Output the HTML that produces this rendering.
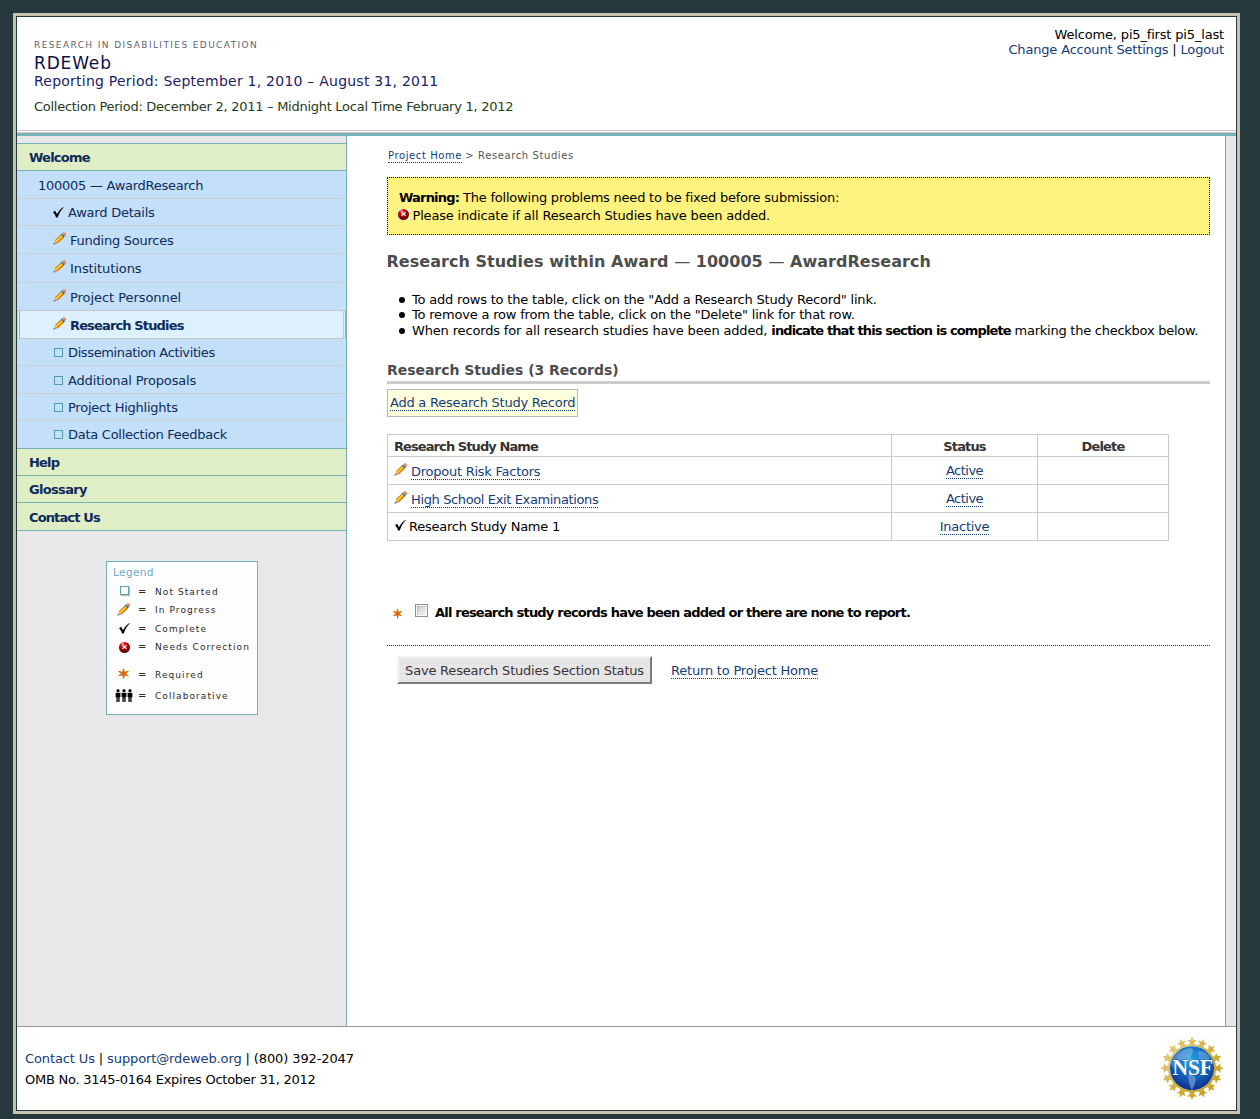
<!DOCTYPE html>
<html lang="en">
<head>
<meta charset="utf-8">
<title>RDEWeb - Research Studies</title>
<style>
html,body{margin:0;padding:0;}
body{background:#25383c;font-family:"DejaVu Sans","Liberation Sans",sans-serif;font-size:13px;color:#000;width:1260px;height:1119px;position:relative;overflow:hidden;letter-spacing:-0.25px;}
a{color:#143c7a;text-decoration:none;}
#frame{position:absolute;left:13px;top:13px;width:1219px;height:1093px;border:3px solid #c6c2ae;background:#25383c;padding:1px;}
#page{position:relative;width:1219px;height:1093px;background:#fff;overflow:hidden;}
/* header */
#header{position:absolute;left:0;top:0;width:1219px;height:113px;border-bottom:1px solid #c9c9c9;}
#hline2{position:absolute;left:0;top:115px;width:1219px;height:1px;background:#d6cccc;}
#tealbar{position:absolute;left:0;top:116px;width:1219px;height:3px;background:#76b1b5;}
#org{position:absolute;left:17px;top:22px;font-size:9px;letter-spacing:1.39px;color:#62626c;line-height:12px;white-space:nowrap;}
#site{position:absolute;left:17px;top:35px;font-size:17px;color:#0e0e48;line-height:22px;letter-spacing:0.85px;white-space:nowrap;}
#rep{position:absolute;left:17px;top:55px;font-size:14px;color:#1a2268;line-height:18px;letter-spacing:0.23px;white-space:nowrap;}
#coll{position:absolute;left:17px;top:82px;font-size:13px;color:#263a1a;line-height:16px;letter-spacing:-0.27px;white-space:nowrap;}
#user{position:absolute;right:12px;top:10px;text-align:right;line-height:15px;font-size:13px;letter-spacing:-0.17px;white-space:nowrap;}
/* main */
#main{position:absolute;left:0;top:119px;width:1219px;height:890px;background:#e8e8e8;}
#side{position:absolute;left:0;top:0;width:329px;height:890px;border-right:1px solid #76b1b5;}
#content{position:absolute;left:330px;top:0;width:878px;height:890px;background:#fff;border-right:1px solid #76b1b5;}
#nav{position:absolute;left:0;top:7px;width:329px;margin:0;padding:0;list-style:none;border-top:1px solid #76b1b5;}
#nav li{display:block;margin:0;padding:0;box-sizing:border-box;white-space:nowrap;position:relative;}
#nav li.g{background:#dfeec5;border-bottom:1px solid #76b1b5;font-weight:bold;}
#nav li.g a{color:#0d2a5c;position:absolute;left:13px;}
#nav li.b{background:#c3e0f8;border-bottom:1px solid #cfcfcf;}
#nav li.b a{color:#0d2a5c;position:absolute;}
#nav li.last{border-bottom:1px solid #76b1b5;}

#nav li a{line-height:16px;font-size:13px;}
#nav .ck{position:absolute;left:36px;}
#nav .pc{position:absolute;left:36px;}
#nav .sq{position:absolute;left:37px;width:7px;height:7px;border:1px solid #4f9ca3;}
#nav li.sel{background:#c3e0f8;border-bottom:1px solid #c9c9c9;font-weight:bold;}
#nav li.sel .selbox{position:absolute;left:0;right:0;top:-1px;bottom:-1px;background:#ddf0fe;border:1px solid #c9c9c9;border-left:1px solid #d0d0d0;border-right:1px solid #a4a4a4;}
#nav li.sel .selbox:before{content:"";position:absolute;left:1px;top:0;bottom:0;width:1px;background:#a8a8a8;}
#nav li.sel .selbox:after{content:"";position:absolute;right:1px;top:0;bottom:0;width:1px;background:#c9c9c9;}

/* content: coordinates relative to #content (abs x-347, abs y-136) */
a.dl{border-bottom:1px dotted #143c7a;}
#crumb{position:absolute;left:41px;top:13px;font-size:10px;line-height:14px;color:#555;letter-spacing:0.6px;white-space:nowrap;}
#crumb a{display:inline-block;height:13px;margin-right:-0.6px;}
#warn{position:absolute;left:40px;top:41px;width:799px;height:38px;padding:11px 11px 7px 11px;border:1px dotted #000;background:#fff380;line-height:18px;font-size:13px;white-space:nowrap;letter-spacing:-0.18px;}
#warn .l1{letter-spacing:-0.22px;}
#warn b{letter-spacing:-0.8px;}
#warn .err{position:relative;top:0px;margin-right:3.5px;margin-left:-1px;}
#h1{position:absolute;left:39.5px;top:115px;margin:0;font-size:16px;line-height:22px;font-weight:bold;color:#4d4d4d;letter-spacing:0.03px;white-space:nowrap;}
#h1 .d{font-weight:normal;}
#tips{position:absolute;left:65px;top:156px;margin:0;padding:0;list-style:none;font-size:13px;line-height:16px;white-space:nowrap;letter-spacing:-0.19px;}
#tips .t3 .a{letter-spacing:-0.16px;}#tips .t3 .c{letter-spacing:-0.25px;}
#tips li{position:absolute;left:0;}
#tips .t1{top:0}#tips .t2{top:15px}#tips .t3{top:31px}
#tips li:before{content:"";position:absolute;left:-13px;top:5px;width:6px;height:6px;border-radius:50%;background:#000;}
#tips b{letter-spacing:-0.88px;}
#h2{position:absolute;left:40px;top:222px;width:823px;height:23px;margin:0;border-bottom:3px solid #ccc;font-size:14px;line-height:24px;font-weight:bold;color:#4d4d4d;letter-spacing:-0.04px;white-space:nowrap;text-indent:0;}
#addbtn{position:absolute;left:40px;top:253px;width:191px;height:28px;border:1px solid #b9b9b9;background:#ffffde;box-sizing:border-box;font-size:13px;line-height:16px;white-space:nowrap;letter-spacing:-0.2px;}
#addbtn a{position:absolute;left:2px;top:5px;display:block;height:15px;line-height:16px;letter-spacing:-0.24px;}
#tbl{position:absolute;left:40px;top:298px;border-collapse:separate;border-spacing:0;font-size:13px;table-layout:fixed;width:782px;border-top:1px solid #c9c9c9;border-left:1px solid #c9c9c9;}
#tbl th,#tbl td{border-right:1px solid #c9c9c9;border-bottom:1px solid #c9c9c9;padding:0;position:relative;white-space:nowrap;box-sizing:content-box;}
#tbl th{height:21px;font-weight:bold;color:#333;letter-spacing:-0.84px;}
#tbl th.c1{letter-spacing:-0.91px;}
#tbl td{height:27px;}
#tbl .c1{width:503px;text-align:left;}
#tbl th.c1{width:497px;}
#tbl .c2{width:145px;text-align:center;}
#tbl .c3{width:130px;text-align:center;}
#tbl th.c1{padding-left:6px;}
#tbl th span{position:relative;top:1px;}
#tbl .pc{position:absolute;left:6px;top:6px;}
#tbl .ck{position:absolute;left:7px;top:7px;}
#tbl .n1{position:absolute;left:23px;top:7px;line-height:16px;height:15px;display:block;}
#tbl .n2{position:absolute;left:21px;top:6px;line-height:16px;}
#chk{position:absolute;left:40px;top:460px;height:30px;width:800px;}
#chk .star{position:absolute;left:6px;top:11.6px;}
#chk .cb{position:absolute;left:28px;top:8px;width:11px;height:11px;border:1px solid #8e8f8f;background:linear-gradient(135deg,#bcc2cb 0%,#dfe2e6 50%,#f6f6f7 100%);box-shadow:inset 0 0 0 1px #fbfbfb, inset 2px 2px 0 0 rgba(150,158,170,0.35);}
#chk label{position:absolute;left:48px;top:9px;font-weight:bold;font-size:13px;line-height:16px;white-space:nowrap;letter-spacing:-0.8px;}
#dots{position:absolute;left:40px;top:509px;width:823px;height:0;border-top:1px dotted #333;}
#savebtn{position:absolute;left:50px;top:520px;width:251px;height:23px;padding-top:1px;border:2px solid;border-color:#f3f3f3 #7b7b7b #7b7b7b #f3f3f3;background:#e6e6e6;color:#3a3238;font-size:13px;line-height:24px;text-align:center;white-space:nowrap;letter-spacing:-0.2px;}
#ret{position:absolute;left:324px;top:527px;display:block;height:15px;font-size:13px;line-height:16px;white-space:nowrap;letter-spacing:-0.2px;}

#legend{position:absolute;left:89px;top:425px;width:150px;height:152px;border:1px solid #76b1b5;background:#fdfdfd;font-size:9px;letter-spacing:1.08px;color:#2a2a2a;}
#legend .lt{position:absolute;left:6px;top:3px;font-size:10.5px;line-height:14px;color:#6ea9c9;letter-spacing:0.38px;}
#legend .lr{position:absolute;left:0;width:150px;height:12px;line-height:12px;white-space:nowrap;}
#legend .lr svg{position:absolute;}
#legend .lr i{position:absolute;left:31px;top:0;font-style:normal;font-size:10px;}
#legend .lr em{position:absolute;left:48px;top:0;font-style:normal;}
#legend .lsq{position:absolute;left:13px;top:0px;width:7px;height:7px;border:1px solid #5fa0b0;background:#fff;box-shadow:1px 1px 1px #bbb;}
#footer{position:absolute;left:0;top:1009px;width:1219px;height:83px;border-top:1px solid #999;background:#fff;}

#f1{position:absolute;left:8px;top:24px;font-size:13px;line-height:16px;white-space:nowrap;letter-spacing:-0.12px;}
#f2{position:absolute;left:8px;top:45px;font-size:13px;line-height:16px;white-space:nowrap;letter-spacing:-0.25px;}
#nsf{position:absolute;left:1142.5px;top:8.5px;}
</style>
</head>
<body>
<svg width="0" height="0" style="position:absolute"><defs>
<g id="pencil">
<path d="M0.93 11.55 L2.32 8.10 L5.04 10.90 L1.56 12.19 Z" fill="#e3b49c"/>
<path d="M1.24 11.87 L3.89 9.71 L5.04 10.90 L1.56 12.19 Z" fill="#c98f84"/>
<path d="M0.46 12.64 L0.50 11.83 L1.26 10.74 L2.38 11.89 L1.27 12.61 Z" fill="#77696a"/>
<path d="M2.10 8.31 L7.98 2.59 L10.70 5.38 L4.83 11.10 Z" fill="#e58a12"/>
<path d="M2.77 8.99 L8.64 3.27 L9.83 4.49 L3.95 10.21 Z" fill="#ffcf1e"/>
<path d="M3.12 9.35 L8.99 3.63 L9.41 4.06 L3.53 9.78 Z" fill="#ffe23c"/>
<path d="M3.95 10.21 L9.83 4.49 L10.70 5.38 L4.83 11.10 Z" fill="#e48c06"/>
<path d="M4.44 10.71 L10.31 4.99 L10.70 5.38 L4.83 11.10 Z" fill="#c9700c"/>
<path d="M2.10 8.31 L7.98 2.59 L8.29 2.91 L2.42 8.63 Z" fill="#cf7a10"/>
<path d="M7.83 2.73 L9.27 1.33 L11.99 4.13 L10.55 5.52 Z" fill="#2f6f92"/>
<path d="M8.57 3.48 L10.00 2.08 L10.77 2.87 L9.33 4.27 Z" fill="#5ea6d6"/>
<path d="M9.27 1.33 L10.41 0.22 L11.51 0.34 L13.04 1.91 L13.13 3.01 L11.99 4.13 Z" fill="#ee7a4c"/>
<path d="M9.79 1.87 L11.29 0.40 L12.06 1.19 L10.56 2.66 Z" fill="#f7a07a"/>
</g>
<g id="check"><path d="M0.1 5.3 L2.1 3.8 Q3.3 5.4 3.9 7.3 Q6.2 2.6 10.2 0 L10.6 0.5 Q7 3.9 4.7 10.4 L3 10.4 Q2 7.3 0.1 5.3 Z" fill="#000"/></g>
<radialGradient id="errg" cx="0.5" cy="0.42" r="0.68" fx="0.3" fy="0.15"><stop offset="0" stop-color="#f2b4b4"/><stop offset="0.28" stop-color="#d81414"/><stop offset="0.58" stop-color="#a80000"/><stop offset="1" stop-color="#2a0000"/></radialGradient>
<g id="err"><rect x="0" y="0" width="11" height="11" fill="#fff"/><circle cx="5.5" cy="5.5" r="5.5" fill="url(#errg)"/><path d="M3.5 3.2 L7.5 6.8 M7.5 3.2 L3.5 6.8" stroke="#fff" stroke-width="1.25" stroke-linecap="butt" opacity="0.92"/></g>
<g id="star"><path d="M5.90 5.60 L5.20 1.55 L4.60 0.20 L4.00 1.55 L3.30 5.60 Z M3.30 5.60 L4.00 9.65 L4.60 11.00 L5.20 9.65 L5.90 5.60 Z M5.25 6.73 L8.34 4.13 L9.19 2.95 L7.74 3.09 L3.95 4.47 Z M3.95 6.73 L7.74 8.11 L9.19 8.25 L8.34 7.07 L5.25 4.47 Z M3.95 4.47 L0.86 7.07 L0.01 8.25 L1.46 8.11 L5.25 6.73 Z M5.25 4.47 L1.46 3.09 L0.01 2.95 L0.86 4.13 L3.95 6.73 Z" fill="#de6a0c"/><circle cx="4.6" cy="5.6" r="1.9" fill="#de6a0c"/></g>
<g id="ppl"><g id="p1"><circle cx="3" cy="1.8" r="1.6" fill="#000"/><path d="M0.6 4 H5.4 V8.6 H4.6 V14 H3.3 V9.5 H2.7 V14 H1.4 V8.6 H0.6 Z" fill="#000"/></g><use href="#p1" x="6"/><use href="#p1" x="12"/></g>
<linearGradient id="gold" x1="0" y1="0" x2="1" y2="1"><stop offset="0" stop-color="#e6d28c"/><stop offset="0.5" stop-color="#d2b040"/><stop offset="1" stop-color="#c49c1c"/></linearGradient>
<radialGradient id="globe" cx="0.5" cy="0.32" r="0.7"><stop offset="0" stop-color="#1fa8e2"/><stop offset="0.45" stop-color="#1672c6"/><stop offset="1" stop-color="#0a2a88"/></radialGradient>
<g id="nsflogo"><rect x="0" y="0" width="64" height="64" fill="#fdfdf9"/>
<path d="M32.00 0.50 L33.35 3.74 L36.85 4.02 L34.19 6.31 L35.00 9.73 L32.00 7.90 L29.00 9.73 L29.81 6.31 L27.15 4.02 L30.65 3.74 Z M44.13 2.91 L44.14 6.42 L47.26 8.02 L43.93 9.12 L43.37 12.58 L41.30 9.75 L37.83 10.29 L39.89 7.44 L38.30 4.31 L41.64 5.39 Z M54.42 9.78 L53.08 13.03 L55.35 15.71 L51.85 15.44 L50.01 18.43 L49.18 15.02 L45.77 14.19 L48.76 12.35 L48.49 8.85 L51.17 11.12 Z M61.29 20.07 L58.81 22.56 L59.89 25.90 L56.76 24.31 L53.91 26.37 L54.45 22.90 L51.62 20.83 L55.08 20.27 L56.18 16.94 L57.78 20.06 Z M63.70 32.20 L60.46 33.55 L60.18 37.05 L57.89 34.39 L54.47 35.20 L56.30 32.20 L54.47 29.20 L57.89 30.01 L60.18 27.35 L60.46 30.85 Z M61.29 44.33 L57.78 44.34 L56.18 47.46 L55.08 44.13 L51.62 43.57 L54.45 41.50 L53.91 38.03 L56.76 40.09 L59.89 38.50 L58.81 41.84 Z M54.42 54.62 L51.17 53.28 L48.49 55.55 L48.76 52.05 L45.77 50.21 L49.18 49.38 L50.01 45.97 L51.85 48.96 L55.35 48.69 L53.08 51.37 Z M44.13 61.49 L41.64 59.01 L38.30 60.09 L39.89 56.96 L37.83 54.11 L41.30 54.65 L43.37 51.82 L43.93 55.28 L47.26 56.38 L44.14 57.98 Z M32.00 63.90 L30.65 60.66 L27.15 60.38 L29.81 58.09 L29.00 54.67 L32.00 56.50 L35.00 54.67 L34.19 58.09 L36.85 60.38 L33.35 60.66 Z M19.87 61.49 L19.86 57.98 L16.74 56.38 L20.07 55.28 L20.63 51.82 L22.70 54.65 L26.17 54.11 L24.11 56.96 L25.70 60.09 L22.36 59.01 Z M9.58 54.62 L10.92 51.37 L8.65 48.69 L12.15 48.96 L13.99 45.97 L14.82 49.38 L18.23 50.21 L15.24 52.05 L15.51 55.55 L12.83 53.28 Z M2.71 44.33 L5.19 41.84 L4.11 38.50 L7.24 40.09 L10.09 38.03 L9.55 41.50 L12.38 43.57 L8.92 44.13 L7.82 47.46 L6.22 44.34 Z M0.30 32.20 L3.54 30.85 L3.82 27.35 L6.11 30.01 L9.53 29.20 L7.70 32.20 L9.53 35.20 L6.11 34.39 L3.82 37.05 L3.54 33.55 Z M2.71 20.07 L6.22 20.06 L7.82 16.94 L8.92 20.27 L12.38 20.83 L9.55 22.90 L10.09 26.37 L7.24 24.31 L4.11 25.90 L5.19 22.56 Z M9.58 9.78 L12.83 11.12 L15.51 8.85 L15.24 12.35 L18.23 14.19 L14.82 15.02 L13.99 18.43 L12.15 15.44 L8.65 15.71 L10.92 13.03 Z M19.87 2.91 L22.36 5.39 L25.70 4.31 L24.11 7.44 L26.17 10.29 L22.70 9.75 L20.63 12.58 L20.07 9.12 L16.74 8.02 L19.86 6.42 Z" fill="url(#gold)"/>
<circle cx="32" cy="32.2" r="23" fill="none" stroke="url(#gold)" stroke-width="2"/>
<circle cx="32" cy="32.2" r="22" fill="url(#globe)"/>
<path d="M17 22 Q20 13 30 12 Q34 12 33 16 Q30 20 31 24 Q27 27 24 24 Q20 26 17 22 Z" fill="#9cc0e6" opacity="0.5"/>
<path d="M38 15 Q46 14 50 22 Q48 27 43 25 Q38 24 38 15 Z" fill="#8fb4e0" opacity="0.45"/>
<path d="M28 39 Q34 38 36 43 Q35 49 32 54 Q29 50 28 39 Z" fill="#7a9cd6" opacity="0.7"/>
<path d="M11 27 Q14 18 22 13 Q16 22 16 34 Q12 32 11 27 Z" fill="#8fb0e0" opacity="0.45"/>
</g>
</defs></svg>
<div id="frame"><div id="page">
<div id="header">
  <div id="org">RESEARCH IN DISABILITIES EDUCATION</div>
  <div id="site">RDEWeb</div>
  <div id="rep">Reporting Period: September 1, 2010 – August 31, 2011</div>
  <div id="coll">Collection Period: December 2, 2011 – Midnight Local Time February 1, 2012</div>
  <div id="user">Welcome, pi5_first pi5_last<br><a href="#">Change Account Settings</a> | <a href="#">Logout</a></div>
</div>
<div id="hline2"></div>
<div id="tealbar"></div>
<div id="main">
  <div id="side">
    <ul id="nav">
      <li class="g" style="height:27px"><a href="#" style="left:12px;top:6px;letter-spacing:-0.76px">Welcome</a></li>
      <li class="b" style="height:28px"><a href="#" style="left:21px;top:7px;letter-spacing:-0.26px">100005 — AwardResearch</a></li>
      <li class="b" style="height:27px"><svg class="ck" style="top:8px" width="11" height="11" viewBox="0 0 11 11"><use href="#check"/></svg><a href="#" style="left:51px;top:6px;letter-spacing:-0.22px">Award Details</a></li>
      <li class="b" style="height:28px"><svg class="pc" style="top:6px" width="13" height="13" viewBox="0 0 13 13"><use href="#pencil"/></svg><a href="#" style="left:53px;top:7px;letter-spacing:-0.24px">Funding Sources</a></li>
      <li class="b" style="height:29px"><svg class="pc" style="top:6px" width="13" height="13" viewBox="0 0 13 13"><use href="#pencil"/></svg><a href="#" style="left:53px;top:7px;letter-spacing:-0.09px">Institutions</a></li>
      <li class="b" style="height:28px"><svg class="pc" style="top:6px" width="13" height="13" viewBox="0 0 13 13"><use href="#pencil"/></svg><a href="#" style="left:53px;top:7px;letter-spacing:-0.06px">Project Personnel</a></li>
      <li class="b sel" style="height:28px"><div class="selbox"></div><svg class="pc" style="top:6px" width="13" height="13" viewBox="0 0 13 13"><use href="#pencil"/></svg><a href="#" style="left:53px;top:7px;letter-spacing:-0.855px">Research Studies</a></li>
      <li class="b" style="height:27px"><span class="sq" style="top:9px"></span><a href="#" style="left:51px;top:6px;letter-spacing:-0.38px">Dissemination Activities</a></li>
      <li class="b" style="height:28px"><span class="sq" style="top:10px"></span><a href="#" style="left:51px;top:7px;letter-spacing:-0.16px">Additional Proposals</a></li>
      <li class="b" style="height:27px"><span class="sq" style="top:9px"></span><a href="#" style="left:51px;top:6px;letter-spacing:-0.24px">Project Highlights</a></li>
      <li class="b last" style="height:28px"><span class="sq" style="top:9px"></span><a href="#" style="left:51px;top:6px;letter-spacing:-0.27px">Data Collection Feedback</a></li>
      <li class="g" style="height:27px"><a href="#" style="left:12px;top:6px;letter-spacing:-0.83px">Help</a></li>
      <li class="g" style="height:27px"><a href="#" style="left:12px;top:6px;letter-spacing:-0.67px">Glossary</a></li>
      <li class="g" style="height:28px"><a href="#" style="left:12px;top:7px;letter-spacing:-0.87px">Contact Us</a></li>
    </ul>
    <div id="legend">
      <div class="lt">Legend</div>
      <div class="lr" style="top:24px"><span class="lsq"></span><i>=</i><em>Not Started</em></div>
      <div class="lr" style="top:42px"><svg style="left:10px;top:-1px" width="13" height="13" viewBox="0 0 13 13"><use href="#pencil"/></svg><i>=</i><em>In Progress</em></div>
      <div class="lr" style="top:61px"><svg style="left:12px;top:0px" width="11" height="11" viewBox="0 0 11 11"><use href="#check"/></svg><i>=</i><em>Complete</em></div>
      <div class="lr" style="top:79px"><svg style="left:11.5px;top:1px" width="11" height="11" viewBox="0 0 11 11"><use href="#err"/></svg><i>=</i><em>Needs Correction</em></div>
      <div class="lr" style="top:107px"><svg style="left:11px;top:-1px" width="12" height="12" viewBox="0 0 10 12" preserveAspectRatio="none"><use href="#star"/></svg><i>=</i><em>Required</em></div>
      <div class="lr" style="top:128px"><svg style="left:8px;top:-1px" width="18" height="13" viewBox="0 0 18 14" preserveAspectRatio="none"><use href="#ppl"/></svg><i>=</i><em>Collaborative</em></div>
    </div>
  </div>
  <div id="content">
    <div id="crumb"><a href="#" class="dl">Project Home</a> &gt; Research Studies</div>
    <div id="warn"><span class="l1"><b>Warning:</b> The following problems need to be fixed before submission:</span><br><svg class="err" width="11" height="11" viewBox="0 0 11 11"><use href="#err"/></svg><span class="l2">Please indicate if all Research Studies have been added.</span></div>
    <h1 id="h1">Research Studies within Award <span class="d">—</span> 100005 <span class="d">—</span> AwardResearch</h1>
    <ul id="tips">
      <li class="t1">To add rows to the table, click on the "Add a Research Study Record" link.</li>
      <li class="t2">To remove a row from the table, click on the "Delete" link for that row.</li>
      <li class="t3"><span class="a">When records for all research studies have been added, </span><b>indicate that this section is complete</b><span class="c"> marking the checkbox below.</span></li>
    </ul>
    <h2 id="h2"><span>Research Studies (3 Records)</span></h2>
    <div id="addbtn"><a href="#" class="dl">Add a Research Study Record</a></div>
    <table id="tbl" cellspacing="0">
      <tr class="hd"><th class="c1"><span>Research Study Name</span></th><th class="c2"><span>Status</span></th><th class="c3"><span>Delete</span></th></tr>
      <tr><td class="c1"><svg class="pc" width="13" height="13" viewBox="0 0 13 13"><use href="#pencil"/></svg><a href="#" class="dl n1">Dropout Risk Factors</a></td><td class="c2"><a href="#" class="dl" style="letter-spacing:-0.5px">Active</a></td><td class="c3"></td></tr>
      <tr><td class="c1"><svg class="pc" width="13" height="13" viewBox="0 0 13 13"><use href="#pencil"/></svg><a href="#" class="dl n1" style="letter-spacing:-0.37px">High School Exit Examinations</a></td><td class="c2"><a href="#" class="dl" style="letter-spacing:-0.5px">Active</a></td><td class="c3"></td></tr>
      <tr><td class="c1"><svg class="ck" width="11" height="11" viewBox="0 0 11 11"><use href="#check"/></svg><span class="n2">Research Study Name 1</span></td><td class="c2"><a href="#" class="dl">Inactive</a></td><td class="c3"></td></tr>
    </table>
    <div id="chk"><svg class="star" width="10" height="12" viewBox="0 0 10 12"><use href="#star"/></svg><span class="cb"></span><label>All research study records have been added or there are none to report.</label></div>
    <div id="dots"></div>
    <div id="savebtn"><span>Save Research Studies Section Status</span></div>
    <a href="#" id="ret" class="dl">Return to Project Home</a>
  </div>
</div>
<div id="footer">
  <div id="f1"><a href="#">Contact Us</a> | <a href="#">support@rdeweb.org</a> | (800) 392-2047</div>
  <div id="f2">OMB No. 3145-0164 Expires October 31, 2012</div>
  <svg id="nsf" width="64" height="64" viewBox="0 0 64 64"><use href="#nsflogo"/><text x="12.6" y="39.3" font-family="Liberation Serif, serif" font-weight="bold" font-size="22.5" textLength="40" lengthAdjust="spacingAndGlyphs" fill="#fff" stroke="#1a3f90" stroke-width="0.3" paint-order="stroke">NSF</text></svg>
</div>
</div></div>
</body>
</html>
